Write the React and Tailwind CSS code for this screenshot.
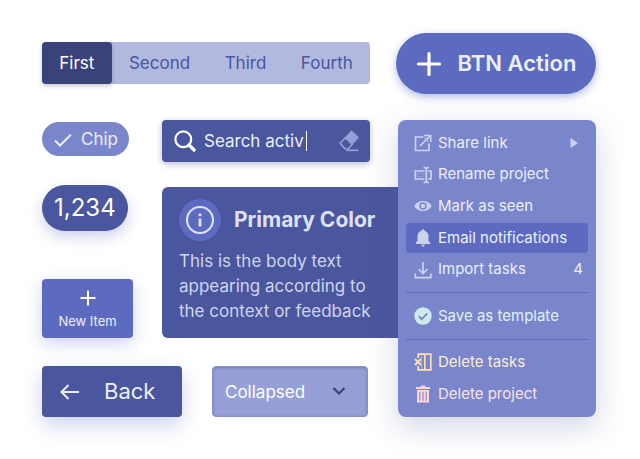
import React, { useState } from "react";

function Icon({ className = "size-[18px]", size = 18, children }) {
  return (
    <svg className={`shrink-0 ${className}`} viewBox={`0 0 ${size} ${size}`} fill="none" stroke="currentColor" strokeWidth="1.7" aria-hidden="true">
      {children}
    </svg>
  );
}

const icons = {
  share: (
    <Icon>
      <path d="M9.500 3H1.500v13.500H15V9.500" />
      <path d="M6 12L16 2M10 1.500h6.700v6.500" />
      <path d="M10 4.300h3.700v3.700" strokeWidth="1" opacity="0.7" />
    </Icon>
  ),
  rename: (
    <Icon>
      <path d="M10.500 5H1.300v8h9.200" />
      <path d="M3.500 7.500h6.500v3H3.500z" strokeWidth="0.6" opacity="0.5" />
      <path d="M14 5h3v8h-3" />
      <path d="M9.600 1.500h1.200l1.500 1 1.500-1h1.200M9.600 16.500h1.200l1.500-1 1.500 1h1.200M12.300 2.500v13" />
    </Icon>
  ),
  eye: (
    <Icon>
      <path d="M.3 9C3.600 2.300 14.400 2.300 17.700 9 14.400 15.700 3.600 15.700.3 9zM9 5.300a3.700 3.700 0 1 0 0 7.400 3.700 3.700 0 0 0 0-7.400z" fill="currentColor" fillRule="evenodd" stroke="none" />
      <circle cx="9" cy="9" r="2.200" fill="currentColor" stroke="none" />
    </Icon>
  ),
  bell: (
    <Icon>
      <path d="M9 .3c.9 0 1.500.6 1.500 1.400C13 2.400 14.500 4.500 14.500 7.300v4.500l1.700 2v1.200H1.800v-1.200l1.700-2V7.300C3.500 4.500 5 2.400 7.500 1.700 7.500.9 8.100.3 9 .3zM7.200 15.800h3.600c0 1-.8 1.800-1.800 1.800s-1.800-.8-1.800-1.800z" fill="currentColor" stroke="none" />
    </Icon>
  ),
  download: (
    <Icon>
      <path d="M9 1v11M4.500 8L9 12.500 13.500 8M1.200 12.500v4.200h15.600v-4.200" />
    </Icon>
  ),
  check: (
    <Icon>
      <circle cx="9" cy="9" r="8.700" fill="currentColor" stroke="none" />
      <path d="M4.700 9.200l3 3 5.700-5.900" stroke="#7986cb" />
    </Icon>
  ),
  deleteTasks: (
    <Icon>
      <path d="M4.200 5V1.200h12.600v15.600H4.200V13M10.800 1.200v15.600" />
      <path d="M7.500 1.200v15.600" strokeWidth="0.7" opacity="0.7" />
      <path d="M.9 6l6 6M6.900 6l-6 6" strokeWidth="1.900" />
    </Icon>
  ),
  trash: (
    <Icon>
      <path d="M2 1.900h4.500L7.300.5h3.400l.8 1.400H16V4H2zM3 5h12v12.600H3zM5.300 6.800v9h1v-9zM8.500 6.800v9h1v-9zM11.700 6.800v9h1v-9z" fill="currentColor" fillRule="evenodd" stroke="none" />
    </Icon>
  ),
};

function MenuItem({ icon, label, tone = "text-[#eceef9]", iconTone = "text-[#cdd2ee]", active, children }) {
  return (
    <button role="menuitem" className={`flex h-[30px] items-center gap-[6px] rounded-[4px] pr-[5px] pl-2 text-left text-[15px] ${tone} ${active ? "bg-[#5c6bc0]" : ""}`}>
      <span className={iconTone}>{icons[icon]}</span>
      <span className="grow whitespace-nowrap">{label}</span>
      {children}
    </button>
  );
}

function Tabs() {
  const [current, setCurrent] = useState("First");
  return (
    <div role="tablist" className="mt-[9px] mr-[26px] flex h-[42px] rounded-[4px] bg-[#b2b9e1]">
      {["First", "Second", "Third", "Fourth"].map((name) => (
        <button
          key={name}
          role="tab"
          aria-selected={current === name}
          onClick={() => setCurrent(name)}
          className={`grow rounded-[4px] px-3 pt-[2px] text-[17px] ${current === name ? "bg-[#3a4379] text-white shadow-[0_2px_4px_rgba(58,67,121,0.3)]" : "text-[#4a569d]"}`}
        >
          {name}
        </button>
      ))}
    </div>
  );
}

function SearchBox() {
  const [query, setQuery] = useState("Search activ");
  return (
    <div className="mr-[26px] flex h-[42px] items-center rounded-[4px] bg-[#4a569d] pr-[10px] pl-3 text-white shadow-[0_2px_6px_rgba(74,86,157,0.4)]">
      <label htmlFor="search" aria-label="Search" className="mr-2">
        <Icon className="size-[22px]" size={22}>
          <circle cx="9.300" cy="9.300" r="7.900" strokeWidth="2.200" />
          <path d="M15 15l5 5" strokeWidth="3.400" strokeLinecap="round" />
        </Icon>
      </label>
      <input id="search" value={query} onChange={(e) => setQuery(e.target.value)} className="field-sizing-content min-w-0 pt-[2px] text-[17px] text-[#eceef9] outline-none" />
      <span className="mx-[2px] h-5 w-px shrink-0 bg-white" />
      <button aria-label="Clear" className="ml-auto text-[#979fd7]">
        <Icon className="size-[22px]" size={22}>
          <path d="M13.500 1.500l6.500 6-6 6.500-6.500-6z" fill="currentColor" strokeLinejoin="round" />
          <path d="M7.500 7.500l-5.300 5.700 5 5.800h3L14.500 14" />
          <path d="M8.500 20.300h12" />
        </Icon>
      </button>
    </div>
  );
}

export default function App() {
  return (
    <main className="grid grid-cols-[minmax(0,1fr)_200px] bg-white pt-[33px] pr-11 pb-[42px] pl-[42px] font-['Inter',sans-serif]">
      <div className="flex min-w-0 flex-col">
        <Tabs />

        <div className="mt-9 flex">
          <div className="flex w-[120px] shrink-0 flex-col items-start pt-[2px]">
            <button aria-pressed="true" className="flex h-[34px] items-center gap-2 rounded-full bg-[#7986cb] px-[11px] pt-px text-[17px] text-[#eceef9]">
              <Icon className="size-5" size={20}>
                <path d="M2 10.500l5 5L18 4.500" strokeWidth="2" />
              </Icon>
              Chip
            </button>
            <span className="mt-[29px] flex h-[46px] items-center rounded-full bg-[#4a569d] px-3 text-[24px] text-white shadow-[0_6px_14px_rgba(92,107,192,0.3)]">1,234</span>
            <button className="mt-12 flex h-[59px] w-[91px] flex-col items-center justify-center rounded-[4px] bg-[#5c6bc0] pt-1 text-[13px] text-[#eceef9] shadow-[0_5px_16px_rgba(92,107,192,0.3)]">
              <Icon className="mb-[6px] size-4" size={16}>
                <path d="M8 .5v15M.5 8h15" stroke="#fff" strokeWidth="2" />
              </Icon>
              New Item
            </button>
          </div>

          <div className="flex min-w-0 grow flex-col">
            <SearchBox />
            <section className="mt-[25px] -mr-2 rounded-[6px] bg-[#4a569d] px-[17px] pt-3 pb-[14px]">
              <div className="flex items-center gap-[13px]">
                <span className="flex size-[42px] shrink-0 items-center justify-center rounded-full bg-[#5c6bc0] text-[#dee1f3]">
                  <Icon className="size-7" size={28}>
                    <circle cx="14" cy="14" r="13" strokeWidth="2.200" />
                    <path d="M14 12.500v8M14 7.500v2.800" strokeWidth="2.800" />
                  </Icon>
                </span>
                <h2 className="text-[21px] font-bold whitespace-nowrap text-[#dee1f3]">Primary Color</h2>
              </div>
              <p className="mt-2 text-[17px] leading-[25px] text-[#d0d4ee]">
                This is the body text
                <br />
                appearing according to
                <br />
                the context or feedback
              </p>
            </section>
          </div>
        </div>

        <div className="mt-7 flex gap-[30px]">
          <button className="flex h-[51px] w-[140px] items-center gap-6 rounded-[4px] bg-[#4a569d] pl-[18px] text-[22px] text-[#eceef9] shadow-[0_8px_20px_rgba(92,107,192,0.3)]">
            <Icon className="size-5" size={20}>
              <path d="M19 10H1.500M8.500 3L1.500 10l7 7" strokeWidth="2" />
            </Icon>
            Back
          </button>
          <div className="relative w-[156px]">
            <select aria-label="Section" className="h-full w-full appearance-none rounded-[4px] border border-[#8790c8] bg-[#979fd7] pt-[2px] pl-3 text-[17px] text-white shadow-[inset_0_1px_3px_rgba(74,86,157,0.5)]">
              <option>Collapsed</option>
            </select>
            <Icon className="pointer-events-none absolute top-[18px] right-[22px] size-[14px] text-[#3a4379]" size={14}>
              <path d="M1.500 4L7 9.500 12.500 4" strokeWidth="2.200" />
            </Icon>
          </div>
        </div>
      </div>

      <div className="z-10 flex flex-col">
        <button className="flex h-[61px] items-center justify-center gap-4 rounded-full bg-[#5c6bc0] text-[22px] font-semibold whitespace-nowrap text-[#eceef9] shadow-[0_3px_8px_rgba(92,107,192,0.45)]">
          <Icon className="size-[26px]" size={26}>
            <path d="M13 2.500v21M2.500 13h21" stroke="#fff" strokeWidth="3.200" strokeLinecap="round" />
          </Icon>
          BTN Action
        </button>

        <div role="menu" className="mt-[26px] ml-[2px] flex grow flex-col justify-between rounded-[8px] bg-[#7986cb] p-2 shadow-[0_10px_30px_rgba(74,86,157,0.25)]">
          <MenuItem icon="share" label="Share link">
            <svg className="mr-1 size-[10px] text-[#cdd2ee]" viewBox="0 0 10 10" fill="currentColor" aria-hidden="true">
              <path d="M1.500 0v10L9 5z" />
            </svg>
          </MenuItem>
          <MenuItem icon="rename" label="Rename project" />
          <MenuItem icon="eye" label="Mark as seen" />
          <MenuItem icon="bell" label="Email notifications" active />
          <MenuItem icon="download" label="Import tasks">
            <span>4</span>
          </MenuItem>
          <hr className="my-[6px] border-[#5c6bc0]" />
          <MenuItem icon="check" label="Save as template" tone="text-[#e0f2f5]" iconTone="text-[#cfe9ec]" />
          <hr className="my-[6px] border-[#5c6bc0]" />
          <MenuItem icon="deleteTasks" label="Delete tasks" tone="text-[#ffecd0]" iconTone="text-[#ffdfae]" />
          <MenuItem icon="trash" label="Delete project" tone="text-[#fbe3ec]" iconTone="text-[#ffd5d9]" />
        </div>
      </div>
    </main>
  );
}
